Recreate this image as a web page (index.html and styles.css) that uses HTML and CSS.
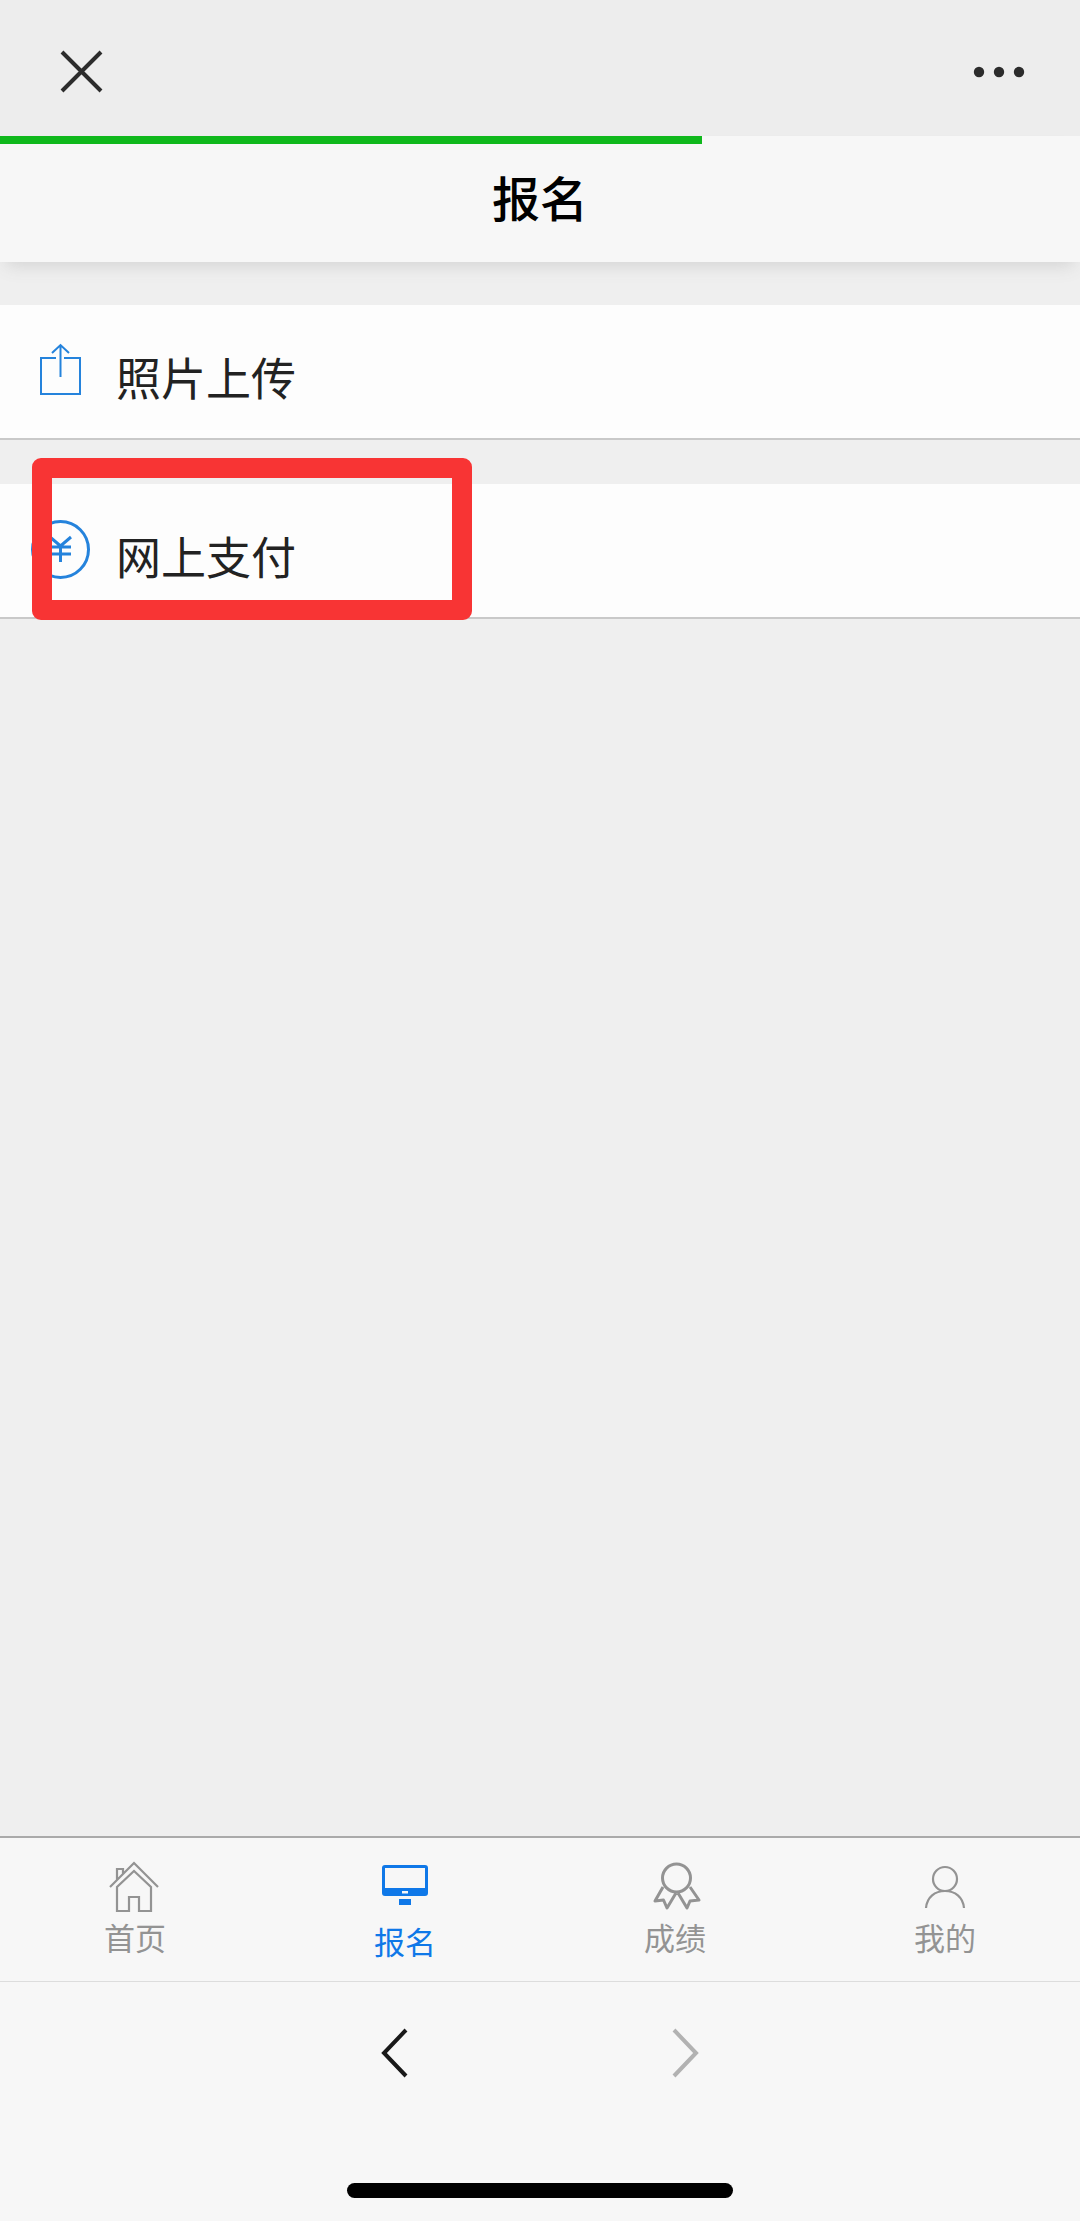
FILE: index.html
```html
<!DOCTYPE html>
<html lang="zh-CN">

<head>
    <meta charset="utf-8">
    <meta name="viewport" content="width=device-width, initial-scale=1.0">
    <title>报名</title>

    <link rel="stylesheet" href="styles.css">
</head>

<body>
    <div class="top-bar">
        <button class="icon-btn" type="button" aria-label="关闭">
            <svg width="44" height="44" viewBox="0 0 44 44" fill="none" stroke="#2c2c2c" stroke-width="4">
                <path d="M2 2L41 41M41 2L2 41" />
            </svg>
        </button>
        <button class="icon-btn" type="button" aria-label="更多">
            <svg width="52" height="12" viewBox="0 0 52 12" fill="#2c2c2c">
                <circle cx="6" cy="6" r="5.200" />
                <circle cx="26" cy="6" r="5.200" />
                <circle cx="46" cy="6" r="5.200" />
            </svg>
        </button>
    </div>

    <header class="page-header">
        <div class="load-bar"></div>
        <h1>报名</h1>
    </header>

    <main class="menu-list">
        <a class="menu-row" href="#upload">
            <svg class="menu-icon" viewBox="0 0 60 60" fill="none" stroke="#2583dc" stroke-width="2">
                <path d="M26 18H11V54H50V18H34M30.500 37V5M22 13L30.500 5L39 13" />
            </svg>
            <span>照片上传</span>
        </a>
        <a class="menu-row" href="#pay">
            <svg class="menu-icon" viewBox="0 0 60 60" fill="none" stroke="#2583dc" stroke-width="3">
                <circle cx="30.500" cy="30.500" r="28" />
                <path d="M20 18L30.500 27L41 18M20 28H41M20 35H41M30.500 27V43" />
            </svg>
            <span>网上支付</span>
            <div class="highlight"></div>
        </a>
    </main>

    <nav class="tab-bar">
        <a class="tab" href="#home">
            <svg class="tab-icon" viewBox="0 0 54 54" fill="none" stroke="#939393" stroke-width="2.200">
                <path d="M2 27L26 3L50 27M9 20V9H15V14M9 27V51H21V37H31V51H43V27L26 11Z" />
            </svg>
            <span>首页</span>
        </a>
        <a class="tab active" href="#signup">
            <svg class="tab-icon" viewBox="0 0 54 54" fill="#0f78e8">
                <path fill-rule="evenodd" d="M7 5H47Q50 5 50 8V33Q50 36 47 36H7Q4 36 4 33V8Q4 5 7 5ZM7 8V28H47V8ZM24 31V33.500H30V31Z" />
                <path d="M21 39H33V45H21Z" />
            </svg>
            <span>报名</span>
        </a>
        <a class="tab" href="#score">
            <svg class="tab-icon" viewBox="0 0 54 54" fill="none" stroke="#939393" stroke-width="3" stroke-linejoin="round">
                <circle cx="28.500" cy="18" r="14" />
                <path d="M15 27L7 41L15.500 40L19 48L28 33M42 27L51 40L42 41L39 48L30 33" />
            </svg>
            <span>成绩</span>
        </a>
        <a class="tab" href="#mine">
            <svg class="tab-icon" viewBox="0 0 54 54" fill="none" stroke="#939393" stroke-width="2.200">
                <circle cx="27" cy="19" r="12" />
                <path d="M8 48C9 37 17 31 27 31S45 37 46 48" />
            </svg>
            <span>我的</span>
        </a>
    </nav>

    <footer class="browser-bar">
        <div class="arrows">
            <button class="icon-btn" type="button" aria-label="后退">
                <svg width="28" height="50" viewBox="0 0 28 50" fill="none" stroke="#191919" stroke-width="4">
                    <path d="M25 2L3 25L25 48" />
                </svg>
            </button>
            <button class="icon-btn" type="button" aria-label="前进">
                <svg width="28" height="50" viewBox="0 0 28 50" fill="none" stroke="#b2b2b2" stroke-width="4">
                    <path d="M3 2L25 25L3 48" />
                </svg>
            </button>
        </div>
        <div class="home-line"></div>
    </footer>
</body>

</html>
```
FILE: styles.css
```css
html {
    font-family: "Noto Sans CJK SC", sans-serif;
    box-sizing: border-box;
}

body {
    display: flex;
    flex-direction: column;
    min-height: 100vh;
    margin: 0px;
    background-color: #efefef;
    color: #222;
}

a {
    color: inherit;
    text-decoration: none;
}

svg {
    display: block;
}

.icon-btn {
    padding: 0px;
    border: none;
    background: none;
    cursor: pointer;
}

.top-bar {
    display: flex;
    align-items: center;
    justify-content: space-between;
    height: 136px;
    padding: 8px 55px 0px 60px;
    box-sizing: border-box;
    background-color: #ededed;
}

.page-header {
    background-color: #f7f7f7;
    box-shadow: 0px 10px 16px -6px #d4d4d4;
}

.load-bar {
    width: 65%;
    height: 8px;
    background-color: #0fb81c;
}

h1 {
    margin: 0px;
    padding: 16px 0px 30px;
    font-size: 48px;
    font-weight: 500;
    line-height: 72px;
    text-align: center;
    color: #000;
}

.menu-list {
    flex: 1;
    display: flex;
    flex-direction: column;
    gap: 44px;
    padding-top: 43px;
}

.menu-row {
    position: relative;
    display: flex;
    align-items: flex-start;
    gap: 26px;
    padding: 35px 30px 34px;
    border-bottom: 2px solid #c9c9c9;
    background-color: #fdfdfd;
    font-size: 45px;
    line-height: 60px;
}

.menu-icon {
    width: 60px;
    height: 60px;
}

.menu-row span {
    padding-top: 7px;
    margin-bottom: -3px;
}

/* red frame drawn over the payment row */
.highlight {
    position: absolute;
    top: -26px;
    left: 32px;
    width: 440px;
    height: 162px;
    box-sizing: border-box;
    border: 20px solid #f83434;
    border-radius: 9px;
}

.tab-bar {
    display: grid;
    grid-template-columns: repeat(4, 1fr);
    border-top: 2px solid #aaa;
    background-color: #f7f7f7;
}

.tab {
    display: flex;
    flex-direction: column;
    align-items: center;
    gap: 7px;
    padding: 22px 0px 24px;
    color: #939393;
    font-size: 31px;
    line-height: 32px;
}

.tab.active {
    gap: 11px;
    color: #0f78e8;
}

.tab-icon {
    width: 54px;
    height: 54px;
}

.browser-bar {
    display: flex;
    flex-direction: column;
    justify-content: space-between;
    align-items: center;
    height: 240px;
    padding: 46px 0px 23px;
    box-sizing: border-box;
    border-top: 1px solid #ddd;
    background-color: #f7f7f7;
}

.arrows {
    display: flex;
    gap: 262px;
}

.home-line {
    width: 386px;
    height: 15px;
    border-radius: 8px;
    background-color: #000;
}
```
